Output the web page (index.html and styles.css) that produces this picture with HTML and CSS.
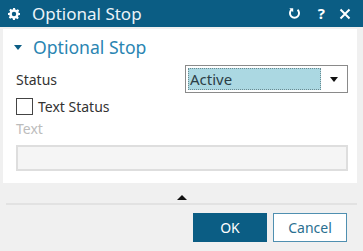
FILE: index.html
```html
<!DOCTYPE HTML>
<html lang=en>
  <head>
    <title>Optional Stop</title>
    <meta name=viewport content=width=device-width,initial-scale=1>
    <link rel="stylesheet" href="styles.css">
  </head>
  <body>
    <div class=dialog>
      <div class=titlebar>
        <svg class=gear width=12 height=12 viewBox="0 0 12 12">
          <path fill="#fff" fill-rule="evenodd" d="M5 0h2l.3 1.6 1.1.5 1.4-.9 1.4 1.4-.9 1.4.5 1.1L12 5v2l-1.6.3-.5 1.1.9 1.4-1.4 1.4-1.4-.9-1.1.5L7 12H5l-.3-1.6-1.1-.5-1.4.9-1.4-1.4.9-1.4-.5-1.1L0 7V5l1.6-.3.5-1.1-.9-1.4 1.4-1.4 1.4.9 1.1-.5zM6 3.8a2.2 2.2 0 1 0 0 4.4a2.2 2.2 0 1 0 0-4.4z"/>
        </svg>
        <span class=title>Optional Stop</span>
        <span class=tools>
          <svg class=reset width=13 height=13 viewBox="0 0 12 12">
            <path d="M3.2 2.6A4.2 4.2 0 1 0 8.8 2.6" fill="none" stroke="#fff" stroke-width="1.8"/>
            <path d="M1.2 1.2h3.6v3.6z" fill="#fff"/>
          </svg>
          <span class=help>?</span>
          <svg width=12 height=12 viewBox="0 0 12 12">
            <path d="M1.5 1.5l9 9M10.5 1.5l-9 9" stroke="#fff" stroke-width="2"/>
          </svg>
        </span>
      </div>

      <div class=panel>
        <div class=section>
          <span class=caret></span>
          <span>Optional Stop</span>
        </div>

        <div class=row>
          <span class=label>Status</span>
          <div class=select>
            <span class=value>Active</span>
            <span class=arrow></span>
          </div>
        </div>

        <label class=check>
          <span class=box></span>
          <span>Text Status</span>
        </label>

        <p class=muted>Text</p>
        <div class=textbox></div>
      </div>

      <div class=expander>
        <span class=up></span>
      </div>

      <div class=buttons>
        <button class=ok>OK</button>
        <button class=cancel>Cancel</button>
      </div>
    </div>
  </body>
</html>
```

FILE: styles.css
```css
html, body {
  margin: 0;
  width: 100%;
  height: 100%;
}
body {
  background-color: #f0f0f0;
  font-family: "Noto Sans", sans-serif;
  color: #333;
}
.dialog {
  width: 363px;
  height: 251px;
  overflow: hidden;
}
.titlebar {
  height: 27px;
  background-color: #0b5d84;
  display: flex;
  align-items: center;
  padding-left: 8px;
  padding-right: 12px;
  color: #fff;
}
.gear {
  margin-right: 12px;
}
.title {
  font-size: 17px;
  color: #eaf3f8;
  flex: 1;
}
.tools {
  display: flex;
  align-items: center;
  gap: 14px;
}
.reset {
  margin-right: 3px;
}
.help {
  font-size: 15px;
  font-weight: bold;
  line-height: 1;
}
.panel {
  background-color: #fff;
  margin: 2px 6px 0 3px;
  height: 154px;
  padding-left: 13px;
  padding-right: 9px;
  box-sizing: border-box;
}
.section {
  display: flex;
  align-items: center;
  height: 34px;
  color: #2a85b2;
  font-size: 17.6px;
  padding-top: 1px;
}
.caret {
  width: 0;
  height: 0;
  border-left: 4px solid transparent;
  border-right: 4px solid transparent;
  border-top: 5px solid #0b5d84;
  margin-left: -2px;
  margin-right: 11px;
}
.row {
  display: flex;
  align-items: center;
  justify-content: space-between;
  height: 30px;
}
.label, .check {
  font-size: 14px;
}
.select {
  width: 163px;
  height: 28px;
  box-sizing: border-box;
  border: 1px solid #8a8a8a;
  display: flex;
  align-items: center;
  padding: 2px;
}
.value {
  flex: 1;
  height: 100%;
  box-sizing: border-box;
  background-color: #abd8e2;
  border: 1px dotted #6a8a90;
  font-size: 15px;
  line-height: 20px;
  color: #2b3e46;
  padding-left: 1px;
}
.arrow {
  width: 0;
  height: 0;
  border-left: 4px solid transparent;
  border-right: 4px solid transparent;
  border-top: 5px solid #111;
  margin-left: 9px;
  margin-right: 7px;
}
.check {
  display: flex;
  align-items: center;
  height: 22px;
  margin-top: 1px;
  gap: 5px;
}
.box {
  width: 17px;
  height: 17px;
  box-sizing: border-box;
  border: 1px solid #444;
}
.muted {
  margin: 2px 0 0;
  font-size: 14px;
  color: #bcbcbc;
  height: 22px;
}
.textbox {
  margin-top: 4px;
  height: 26px;
  box-sizing: border-box;
  background-color: #f5f5f5;
  border: 2px solid #dedede;
}
.expander {
  margin: 0 6px 0 6px;
  height: 22px;
  border-bottom: 2px solid #e2e2e2;
  display: flex;
  justify-content: center;
  align-items: flex-end;
  box-sizing: border-box;
}
.up {
  width: 0;
  height: 0;
  border-left: 5px solid transparent;
  border-right: 5px solid transparent;
  border-bottom: 5px solid #111;
  margin-bottom: 3px;
}
.buttons {
  display: flex;
  justify-content: flex-end;
  gap: 6px;
  padding: 8px 16px 0 0;
}
.buttons button {
  width: 74px;
  height: 29px;
  font-family: "Noto Sans", sans-serif;
  font-size: 14px;
  box-sizing: border-box;
}
.ok {
  background-color: #0b5d84;
  color: #fff;
  border: 1px solid #0b5d84;
}
.cancel {
  background-color: #fff;
  color: #2a6f90;
  border: 1px solid #4f8fb0;
}
```
